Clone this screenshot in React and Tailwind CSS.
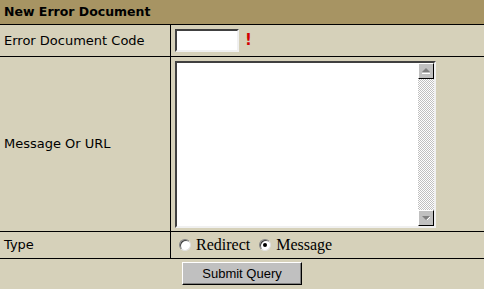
const sans = "font-['DejaVu_Sans',Verdana,sans-serif]";
const serif = "font-['Liberation_Serif','Times_New_Roman',serif]";

const ScrollButton = ({ down }) => (
  <div className="w-[16px] h-[16px] bg-[#c0c0c0] border border-t-white border-l-white border-b-black border-r-black flex items-center justify-center">
    <svg width="10" height="8" viewBox="0 0 10 8">
      {down ? (
        <>
          <polygon points="1,2 9,2 5,6" fill="#808080" />
          <line x1="6" y1="6" x2="9" y2="3" stroke="#fff" strokeWidth="1" />
        </>
      ) : (
        <>
          <polygon points="1,5 9,5 5,1" fill="#808080" />
          <line x1="1" y1="6.5" x2="9" y2="6.5" stroke="#fff" strokeWidth="1" />
        </>
      )}
    </svg>
  </div>
);

const Radio = ({ checked }) => (
  <span className="w-[12px] h-[12px] rounded-full bg-white border border-t-[#808080] border-l-[#808080] border-b-[#e0e0e0] border-r-[#e0e0e0] flex items-center justify-center shadow-[inset_1px_1px_0_#404040]">
    {checked && <span className="w-[4px] h-[4px] rounded-full bg-black" />}
  </span>
);

export default function App() {
  return (
    <div className={`w-[484px] h-[289px] bg-[#d6d1ba] text-black overflow-hidden ${sans}`}>
      <div className="h-[25px] bg-[#a79463] border-b border-black px-[4px] flex items-center text-[12.5px] font-bold">
        New Error Document
      </div>

      <div className="flex h-[32px] border-b border-black">
        <div className="w-[171px] border-r border-black px-[4px] flex items-center text-[13px]">
          Error Document Code
        </div>
        <div className="flex items-center pl-[4px]">
          <div className="w-[64px] h-[23px] bg-white border-2 border-t-[#404040] border-l-[#404040] border-b-[#f0f0f0] border-r-[#f0f0f0]" />
          <span className="ml-[6px] text-[15px] font-bold text-[#d40000]">!</span>
        </div>
      </div>

      <div className="flex h-[175px] border-b border-black">
        <div className="w-[171px] border-r border-black px-[4px] flex items-center text-[13px]">
          Message Or URL
        </div>
        <div className="pl-[4px] pt-[4px]">
          <div className="w-[261px] h-[167px] bg-white border-2 border-t-[#404040] border-l-[#404040] border-b-[#f0f0f0] border-r-[#f0f0f0] flex justify-end">
            <div className="w-[16px] h-full flex flex-col bg-[repeating-conic-gradient(#c0c0c0_0_25%,#fff_0_50%)] bg-[length:2px_2px]">
              <ScrollButton />
              <div className="flex-1" />
              <ScrollButton down />
            </div>
          </div>
        </div>
      </div>

      <div className="flex h-[27px] border-b border-black">
        <div className="w-[171px] border-r border-black px-[4px] flex items-center text-[13px]">
          Type
        </div>
        <div className={`flex items-center pl-[8px] text-[16px] ${serif}`}>
          <Radio />
          <span className="ml-[5px]">Redirect</span>
          <span className="ml-[9px]"><Radio checked /></span>
          <span className="ml-[5px]">Message</span>
        </div>
      </div>

      <div className="flex justify-center pt-[3px]">
        <button className="w-[120px] h-[23px] bg-[#c0c0c0] border border-t-white border-l-white border-b-black border-r-black shadow-[inset_-1px_-1px_0_#808080] text-[13px] font-['Liberation_Sans',Arial,sans-serif]">
          Submit Query
        </button>
      </div>
    </div>
  );
}
